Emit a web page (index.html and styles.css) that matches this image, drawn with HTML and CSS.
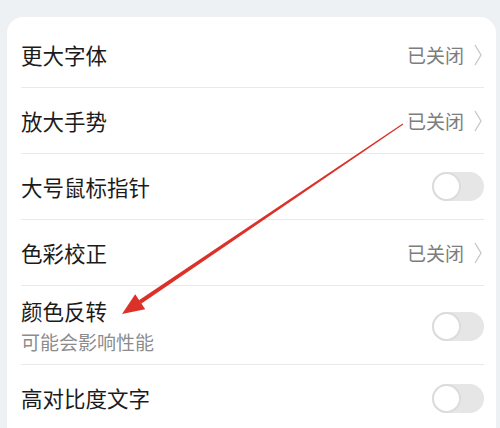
FILE: index.html
```html
<!DOCTYPE html>
<html lang="zh-CN">
<head>
<meta charset="utf-8">
<title>辅助功能</title>
<link rel="stylesheet" href="styles.css">
</head>
<body>
<div class="page">
  <div class="card">
    <div class="row">
      <div class="label">更大字体</div>
      <div class="value">已关闭<svg class="chev" viewBox="0 0 8 22" width="8" height="22"><polyline points="1,1 7,11 1,21" fill="none" stroke="#c9c9c9" stroke-width="1.4"/></svg></div>
    </div>
    <div class="row">
      <div class="label">放大手势</div>
      <div class="value">已关闭<svg class="chev" viewBox="0 0 8 22" width="8" height="22"><polyline points="1,1 7,11 1,21" fill="none" stroke="#c9c9c9" stroke-width="1.4"/></svg></div>
    </div>
    <div class="row">
      <div class="label">大号鼠标指针</div>
      <div class="toggle"><span class="knob"></span></div>
    </div>
    <div class="row">
      <div class="label">色彩校正</div>
      <div class="value">已关闭<svg class="chev" viewBox="0 0 8 22" width="8" height="22"><polyline points="1,1 7,11 1,21" fill="none" stroke="#c9c9c9" stroke-width="1.4"/></svg></div>
    </div>
    <div class="row row-tall">
      <div class="text">
        <div class="label label-tall">颜色反转</div>
        <div class="sub">可能会影响性能</div>
      </div>
      <div class="toggle"><span class="knob"></span></div>
    </div>
    <div class="row row-last">
      <div class="label">高对比度文字</div>
      <div class="toggle"><span class="knob"></span></div>
    </div>
  </div>
  <svg class="arrow" viewBox="0 0 500 428" width="500" height="428">
    <polygon points="403.3,124.4 402.7,123.6 138.9,300.3 141.1,303.7" fill="#db3129"/>
    <polygon points="122,314 135.2,294.2 145.2,309.2" fill="#db3129"/>
  </svg>
</div>
</body>
</html>
```

FILE: styles.css
```css
html, body {
  margin: 0;
  padding: 0;
  background: #eef1f4;
}
body {
  width: 500px;
  height: 428px;
  overflow: hidden;
  font-family: "Noto Sans CJK SC", "Noto Sans", sans-serif;
}
.page {
  position: relative;
  width: 500px;
  height: 428px;
  padding-top: 17px;
  box-sizing: border-box;
}
.card {
  margin: 0 4px 0 7px;
  background: #ffffff;
  border-radius: 16px 16px 0 0;
  padding: 5px 12px 0 14px;
  height: 430px;
  box-sizing: border-box;
}
.row {
  display: flex;
  align-items: center;
  justify-content: space-between;
  height: 66px;
  border-bottom: 1px solid #e9e9e9;
  box-sizing: border-box;
}
.row-tall {
  height: 79px;
  padding: 10px 0 7px;
}
.row-last {
  border-bottom: none;
}
.label {
  font-size: 21.5px;
  color: #1b1b1b;
  line-height: 30px;
}
.label-tall {
  line-height: 30px;
}
.sub {
  font-size: 19px;
  color: #8c8c8c;
  line-height: 31px;
}
.value {
  display: flex;
  align-items: center;
  font-size: 19px;
  color: #7d7d7d;
  margin-right: 2px;
}
.chev {
  margin-left: 10px;
  display: block;
}
.toggle {
  position: relative;
  width: 52px;
  height: 29px;
  border-radius: 15px;
  background: #e6e6e6;
  flex: none;
}
.knob {
  position: absolute;
  left: 0;
  top: 0;
  width: 29px;
  height: 29px;
  box-sizing: border-box;
  border-radius: 50%;
  background: #ffffff;
  border: 2px solid #dcdcdc;
}
.arrow {
  position: absolute;
  left: 0;
  top: 0;
  pointer-events: none;
}
```
